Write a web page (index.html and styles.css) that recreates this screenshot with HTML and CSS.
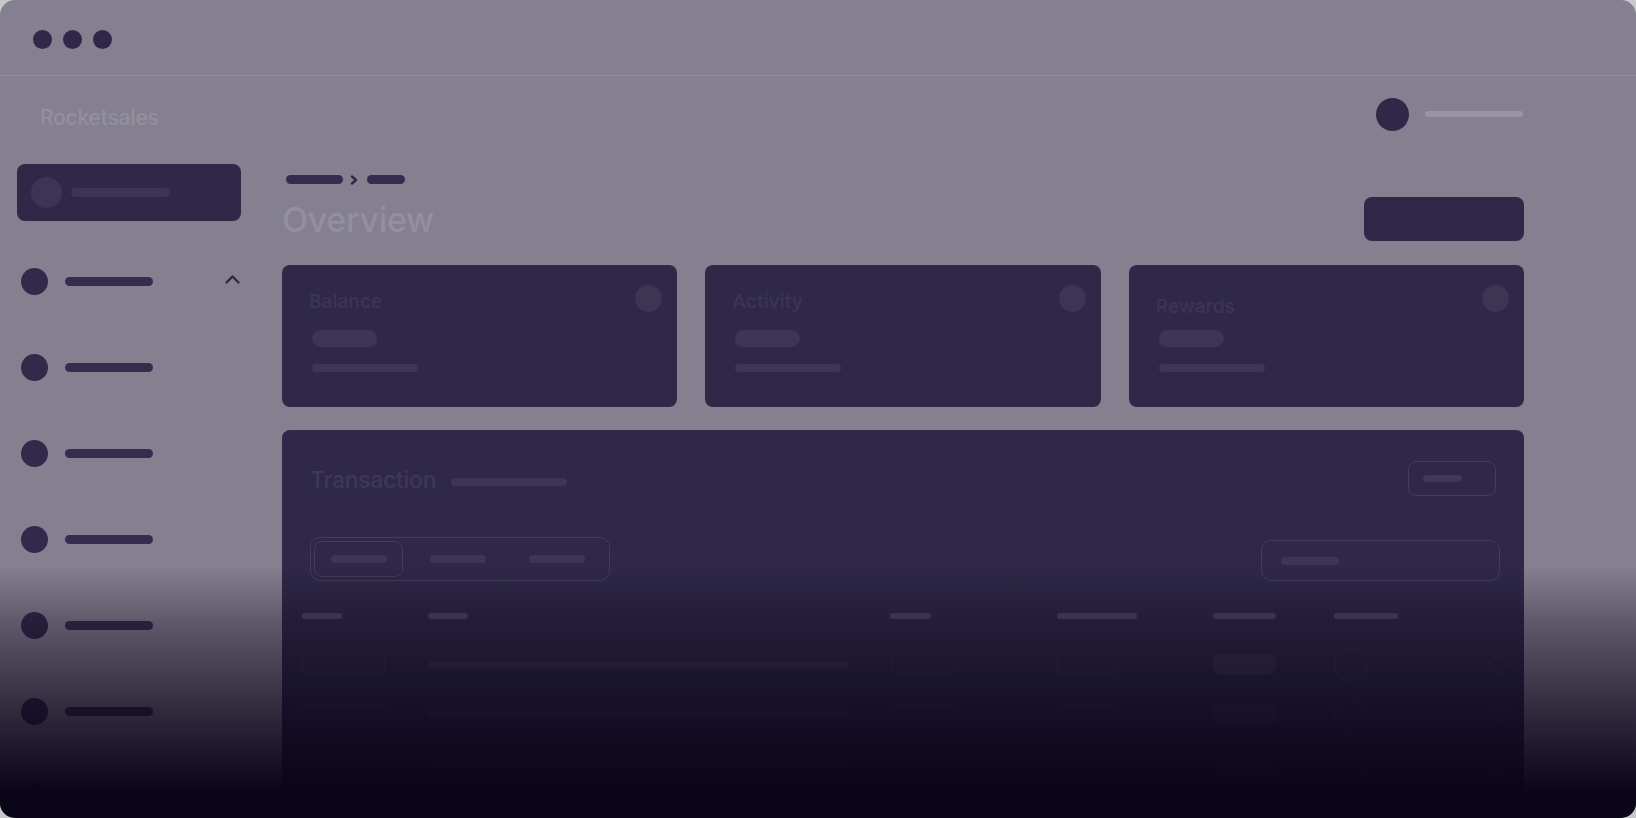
FILE: index.html
```html
<!DOCTYPE html>
<html lang="en">
<head>
<meta charset="utf-8">
<title>Rocketsales – Overview</title>
<link rel="stylesheet" href="styles.css">
</head>
<body>
<div class="window">
  <div class="titlebar">
    <span class="dot"></span><span class="dot"></span><span class="dot"></span>
  </div>
  <div class="topbar">
    <div class="brand">Rocketsales</div>
    <div class="user"><span class="avatar"></span><span class="user-bar"></span></div>
  </div>
  <div class="layout">
    <aside class="sidebar">
      <div class="org"><span class="org-icon"></span><span class="org-bar"></span></div>
      <nav class="nav">
        <div class="nav-item">
          <span class="nav-icon"></span><span class="nav-bar"></span>
          <svg class="nav-chevron" width="15" height="10" viewBox="0 0 15 10"><polyline points="1.5,8.5 7.5,2.5 13.5,8.5" fill="none" stroke="#2f2848" stroke-width="2.4" stroke-linecap="round" stroke-linejoin="round"/></svg>
        </div>
        <div class="nav-item"><span class="nav-icon"></span><span class="nav-bar"></span></div>
        <div class="nav-item"><span class="nav-icon"></span><span class="nav-bar"></span></div>
        <div class="nav-item"><span class="nav-icon"></span><span class="nav-bar"></span></div>
        <div class="nav-item"><span class="nav-icon"></span><span class="nav-bar"></span></div>
        <div class="nav-item"><span class="nav-icon"></span><span class="nav-bar"></span></div>
        <div class="nav-item"><span class="nav-icon"></span><span class="nav-bar"></span></div>
      </nav>
    </aside>
    <main class="main">
      <div class="page-head">
        <div class="page-head-left">
          <div class="crumbs">
            <span class="crumb crumb-1"></span>
            <svg class="crumb-sep" width="8" height="10" viewBox="0 0 8 10"><polyline points="2,1.5 6,5 2,8.5" fill="none" stroke="#2f2848" stroke-width="2.4" stroke-linecap="round" stroke-linejoin="round"/></svg>
            <span class="crumb crumb-2"></span>
          </div>
          <h1 class="page-title">Overview</h1>
        </div>
        <div class="primary-btn"></div>
      </div>

      <div class="cards">
        <div class="card">
          <div class="card-head"><span class="card-title">Balance</span><span class="card-icon"></span></div>
          <div class="card-pill"></div>
          <div class="card-line"></div>
        </div>
        <div class="card">
          <div class="card-head"><span class="card-title">Activity</span><span class="card-icon"></span></div>
          <div class="card-pill"></div>
          <div class="card-line"></div>
        </div>
        <div class="card">
          <div class="card-head"><span class="card-title card-title-low">Rewards</span><span class="card-icon"></span></div>
          <div class="card-pill"></div>
          <div class="card-line"></div>
        </div>
      </div>

      <section class="panel">
        <div class="panel-head">
          <div class="panel-title"><h2 class="panel-heading">Transaction</h2><span class="title-bar"></span></div>
          <div class="outline-btn"><span class="outline-btn-bar"></span></div>
        </div>
        <div class="tools">
          <div class="tabs">
            <div class="tab tab-active"><span class="tab-bar"></span></div>
            <div class="tab"><span class="tab-bar"></span></div>
            <div class="tab"><span class="tab-bar"></span></div>
          </div>
          <div class="search"><span class="search-bar"></span></div>
        </div>
        <div class="table">
          <div class="th"><span class="th-bar w40"></span></div>
          <div class="th"><span class="th-bar w40"></span></div>
          <div class="th"><span class="th-bar w41"></span></div>
          <div class="th"><span class="th-bar w80"></span></div>
          <div class="th"><span class="th-bar w63"></span></div>
          <div class="th"><span class="th-bar w64"></span></div>
          <div class="th"></div>

          <div class="td"><span class="box box-83"></span></div>
          <div class="td"><span class="long-bar"></span></div>
          <div class="td"><span class="box box-63"></span></div>
          <div class="td"><span class="box box-61"></span></div>
          <div class="td"><span class="pill"></span></div>
          <div class="td"><span class="ring"></span></div>
          <div class="td"><span class="ring ring-sm"></span></div>

          <div class="td"><span class="box box-83"></span></div>
          <div class="td"><span class="long-bar"></span></div>
          <div class="td"><span class="box box-63"></span></div>
          <div class="td"><span class="box box-61"></span></div>
          <div class="td"><span class="pill"></span></div>
          <div class="td"><span class="ring"></span></div>
          <div class="td"><span class="ring ring-sm"></span></div>

          <div class="td"><span class="box box-83"></span></div>
          <div class="td"><span class="long-bar"></span></div>
          <div class="td"><span class="box box-63"></span></div>
          <div class="td"><span class="box box-61"></span></div>
          <div class="td"><span class="pill"></span></div>
          <div class="td"><span class="ring"></span></div>
          <div class="td"><span class="ring ring-sm"></span></div>
        </div>
      </section>
    </main>
  </div>
  <div class="fade"></div>
</div>
</body>
</html>
```

FILE: styles.css
```css
* { box-sizing: border-box; }

html, body {
  margin: 0;
  padding: 0;
  background: #c8c7cc;
  font-family: Inter, "Noto Sans", sans-serif;
}

.window {
  position: relative;
  width: 1636px;
  height: 818px;
  border-radius: 15px;
  overflow: hidden;
  background: #85808f;
}

/* title bar */
.titlebar {
  height: 76px;
  border-bottom: 1px solid #918d9c;
  display: flex;
  align-items: center;
  gap: 11px;
  padding: 3px 0 0 33px;
}
.dot {
  width: 19px;
  height: 19px;
  border-radius: 50%;
  background: #2f2848;
}

/* top bar */
.topbar {
  height: 76px;
  display: flex;
  align-items: center;
  justify-content: space-between;
  padding: 0 113px 0 40px;
}
.brand {
  font-size: 21px;
  font-weight: 500;
  line-height: 1;
  color: #938f9e;
  margin-top: 6px;
  letter-spacing: -0.2px;
}
.user {
  display: flex;
  align-items: center;
  gap: 16px;
}
.avatar {
  width: 33px;
  height: 33px;
  border-radius: 50%;
  background: #2f2848;
}
.user-bar {
  width: 98px;
  height: 6px;
  border-radius: 3px;
  background: #9894a2;
}

/* layout */
.layout {
  display: flex;
  padding-left: 17px;
}

/* sidebar */
.sidebar {
  width: 224px;
  flex: none;
  padding-top: 12px;
}
.org {
  height: 57px;
  border-radius: 8px;
  background: #2f2848;
  display: flex;
  align-items: center;
  gap: 9px;
  padding-left: 14px;
}
.org-icon {
  width: 31px;
  height: 31px;
  border-radius: 50%;
  background: #3c3553;
}
.org-bar {
  width: 99px;
  height: 9px;
  border-radius: 5px;
  background: #3c3553;
}
.nav {
  margin-top: 17px;
}
.nav-item {
  height: 86px;
  display: flex;
  align-items: center;
  gap: 17px;
  padding-left: 4px;
}
.nav-icon {
  width: 27px;
  height: 27px;
  border-radius: 50%;
  background: #312a4b;
}
.nav-bar {
  width: 88px;
  height: 9px;
  border-radius: 5px;
  background: #342d4e;
}
.nav-chevron {
  margin-left: auto;
  margin-bottom: 5px;
  margin-right: 1px;
}

/* main */
.main {
  margin-left: 41px;
  width: 1242px;
  flex: none;
}
.page-head {
  padding-top: 23px;
  display: flex;
  justify-content: space-between;
  align-items: flex-end;
}
.crumbs {
  display: flex;
  align-items: center;
  height: 9px;
  padding-left: 4px;
  gap: 7px;
}
.crumb {
  height: 9px;
  border-radius: 5px;
  background: #342d4e;
}
.crumb-1 { width: 57px; }
.crumb-2 { width: 38px; margin-left: 2px; }
.page-title {
  margin: 16px 0 0;
  font-size: 34px;
  font-weight: 500;
  line-height: 40px;
  color: #938f9e;
  letter-spacing: -0.3px;
}
.primary-btn {
  width: 160px;
  height: 44px;
  border-radius: 8px;
  background: #2f2848;
  margin-bottom: -1px;
}

/* cards */
.cards {
  margin-top: 25px;
  display: grid;
  grid-template-columns: repeat(3, 1fr);
  gap: 28px;
}
.card {
  height: 142px;
  border-radius: 8px;
  background: #2f2848;
  padding: 20px 15px 0 30px;
}
.card-head {
  height: 27px;
  display: flex;
  align-items: center;
  justify-content: space-between;
}
.card-title {
  font-size: 19px;
  font-weight: 600;
  line-height: 1;
  color: #3b3452;
  margin-left: -3px;
  margin-top: 6px;
}
.card-title-low {
  margin-top: 16px;
}
.card-icon {
  width: 27px;
  height: 27px;
  border-radius: 50%;
  background: #3c3553;
}
.card-pill {
  margin-top: 18px;
  width: 65px;
  height: 17px;
  border-radius: 9px;
  background: #3d3654;
}
.card-line {
  margin-top: 17px;
  width: 106px;
  height: 8px;
  border-radius: 4px;
  background: #3d3654;
}

/* transaction panel */
.panel {
  margin-top: 23px;
  height: 420px;
  border-radius: 8px;
  background: #2f2848;
  padding: 31px 24px 0 20px;
}
.panel-head {
  height: 35px;
  display: flex;
  align-items: center;
  justify-content: space-between;
  padding: 0 4px 0 8px;
}
.panel-title {
  display: flex;
  align-items: center;
  gap: 15px;
  margin-top: 4px;
}
.panel-heading {
  margin: 0;
  font-size: 23px;
  font-weight: 500;
  line-height: 1;
  color: #3e3855;
  letter-spacing: -0.3px;
}
.title-bar {
  width: 116px;
  height: 8px;
  border-radius: 4px;
  background: #3d3654;
  margin-top: 3px;
}
.outline-btn {
  width: 88px;
  height: 35px;
  border: 1px solid #433c5b;
  border-radius: 8px;
  display: flex;
  align-items: center;
  padding-left: 14px;
}
.outline-btn-bar {
  width: 39px;
  height: 7px;
  border-radius: 4px;
  background: #3f3858;
}

.tools {
  margin-top: 41px;
  display: flex;
  justify-content: space-between;
  align-items: flex-end;
  padding-left: 8px;
}
.tabs {
  width: 300px;
  height: 44px;
  border: 1px solid #433c5b;
  border-radius: 10px;
  display: flex;
  align-items: center;
  gap: 10px;
  padding: 0 3px;
}
.tab {
  width: 89px;
  height: 36px;
  border-radius: 8px;
  border: 1px solid transparent;
  display: flex;
  align-items: center;
  justify-content: center;
}
.tab-active {
  border-color: #433c5b;
}
.tab-bar {
  width: 56px;
  height: 8px;
  border-radius: 4px;
  background: #3d3654;
}
.search {
  width: 239px;
  height: 41px;
  border: 1px solid #433c5b;
  border-radius: 10px;
  display: flex;
  align-items: center;
  padding-left: 19px;
}
.search-bar {
  width: 58px;
  height: 8px;
  border-radius: 4px;
  background: #3d3654;
}

/* table */
.table {
  margin-top: 16px;
  display: grid;
  grid-template-columns: 126px 462px 167px 156px 121px 155px 1fr;
  grid-template-rows: 42px;
  grid-auto-rows: 50px;
}
.th, .td {
  display: flex;
  align-items: center;
}
.th-bar {
  height: 6px;
  border-radius: 3px;
  background: #4d4668;
  margin-bottom: 4px;
}
.w40 { width: 40px; }
.w41 { width: 41px; }
.w80 { width: 80px; }
.w63 { width: 63px; }
.w64 { width: 64px; }

.box {
  height: 20px;
  border-radius: 6px;
  border: 1px solid #3a3353;
}
.box-83 { width: 83px; }
.box-63 { width: 63px; margin-left: 2px; }
.box-61 { width: 61px; }
.long-bar {
  width: 420px;
  height: 7px;
  border-radius: 4px;
  background: #3a3353;
}
.pill {
  width: 63px;
  height: 21px;
  border-radius: 8px;
  background: #3a3353;
}
.ring {
  width: 33px;
  height: 33px;
  border-radius: 50%;
  border: 1px solid #3d3656;
}
.ring-sm {
  width: 17px;
  height: 17px;
}

/* bottom fade overlay */
.fade {
  position: absolute;
  left: 0;
  right: 0;
  top: 565px;
  bottom: 0;
  pointer-events: none;
  background: linear-gradient(to bottom, rgba(10, 5, 25, 0) 0px, rgba(10, 5, 25, 0.33) 60px, rgba(10, 5, 25, 0.7) 146px, rgba(10, 5, 25, 1) 228px);
}
```
